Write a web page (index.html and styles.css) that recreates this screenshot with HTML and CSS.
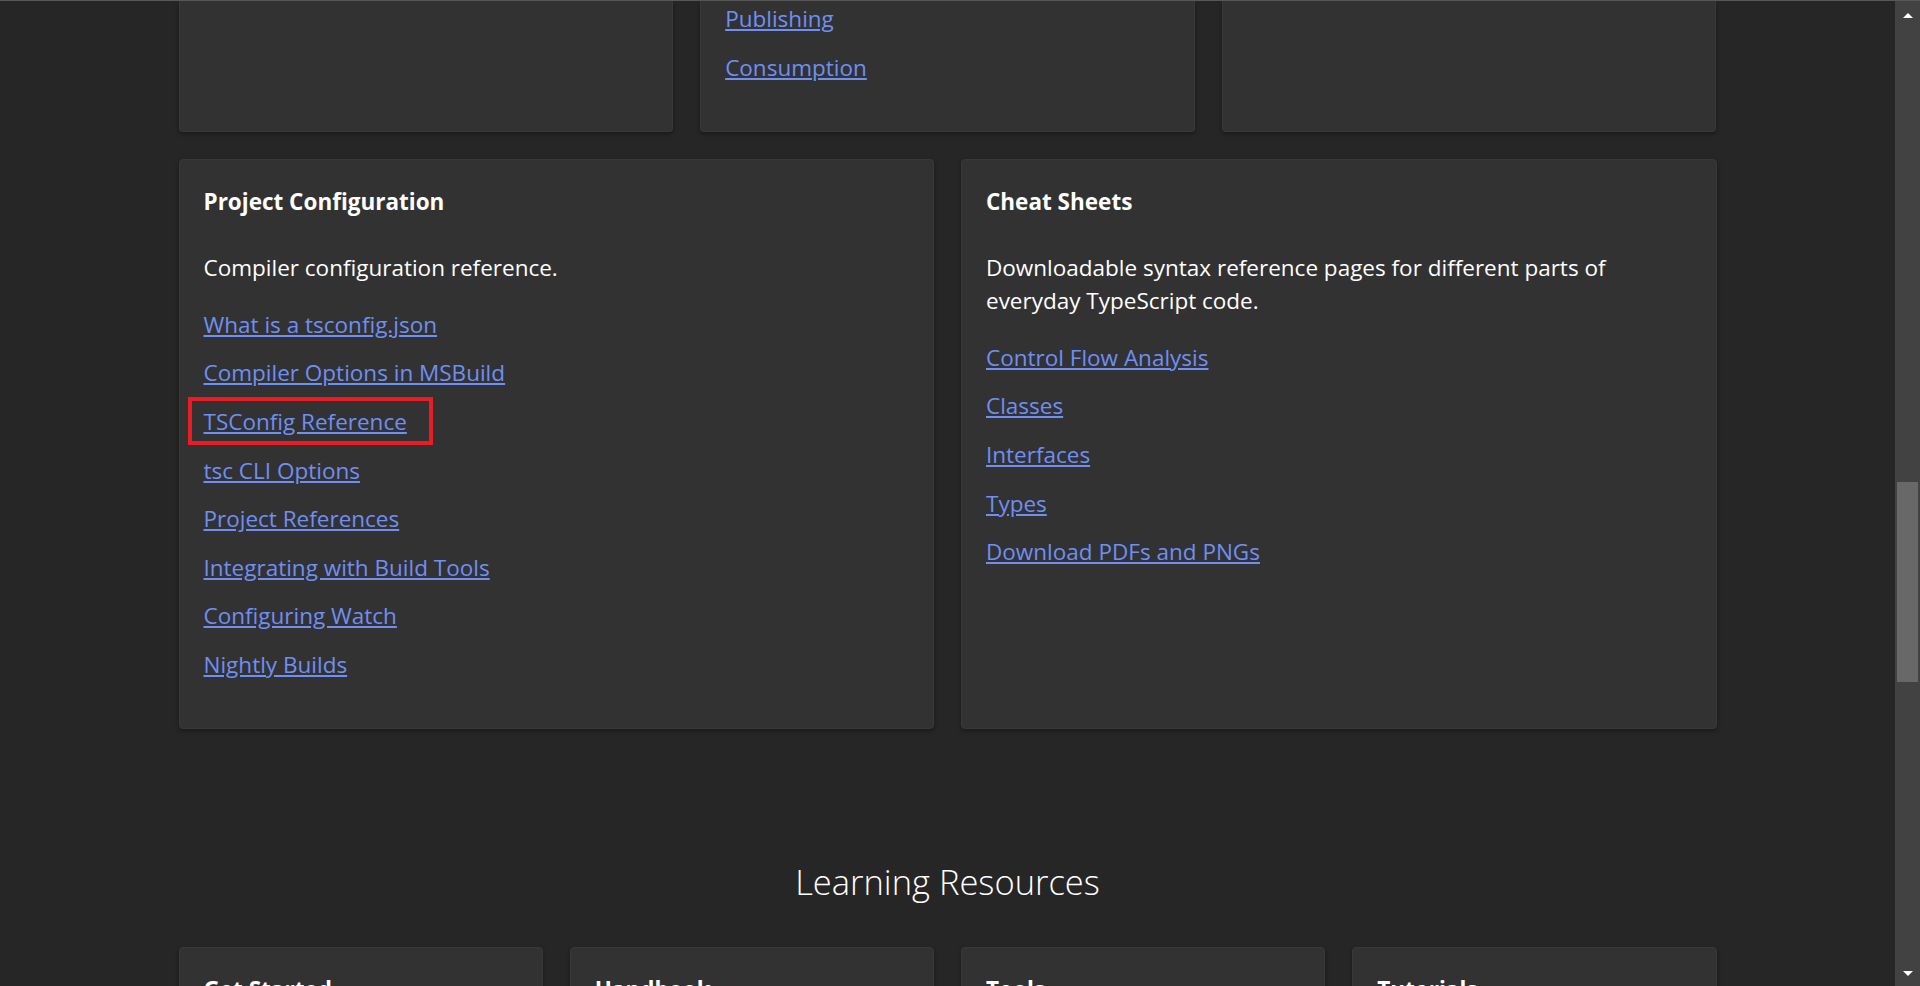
FILE: index.html
```html
<!DOCTYPE html>
<html lang="en">
<head>
<meta charset="utf-8">
<title>Documentation - TypeScript</title>
<link rel="stylesheet" href="styles.css">
</head>
<body>
<div class="window">
  <main class="page">
    <div class="container">
      <section class="grid grid-3">
        <div class="card card--continued"></div>
        <div class="card card--continued">
          <ul class="links">
            <li><a href="#">Publishing</a></li>
            <li><a href="#">Consumption</a></li>
          </ul>
        </div>
        <div class="card card--continued"></div>
      </section>

      <section class="grid grid-2">
        <div class="card">
          <h3 class="card-title">Project Configuration</h3>
          <p class="card-desc">Compiler configuration reference.</p>
          <ul class="links">
            <li><a href="#">What is a tsconfig.json</a></li>
            <li><a href="#">Compiler Options in MSBuild</a></li>
            <li class="highlight"><a href="#">TSConfig Reference</a></li>
            <li><a href="#">tsc CLI Options</a></li>
            <li><a href="#">Project References</a></li>
            <li><a href="#">Integrating with Build Tools</a></li>
            <li><a href="#">Configuring Watch</a></li>
            <li><a href="#">Nightly Builds</a></li>
          </ul>
        </div>
        <div class="card">
          <h3 class="card-title">Cheat Sheets</h3>
          <p class="card-desc">Downloadable syntax reference pages for different parts of everyday TypeScript code.</p>
          <ul class="links">
            <li><a href="#">Control Flow Analysis</a></li>
            <li><a href="#">Classes</a></li>
            <li><a href="#">Interfaces</a></li>
            <li><a href="#">Types</a></li>
            <li><a href="#">Download PDFs and PNGs</a></li>
          </ul>
        </div>
      </section>

      <h2 class="section-title">Learning Resources</h2>

      <section class="grid grid-4">
        <div class="card"><h3 class="card-title">Get Started</h3></div>
        <div class="card"><h3 class="card-title">Handbook</h3></div>
        <div class="card"><h3 class="card-title">Tools</h3></div>
        <div class="card"><h3 class="card-title">Tutorials</h3></div>
      </section>
    </div>
  </main>

  <div class="scrollbar" aria-hidden="true">
    <div class="sb-btn sb-btn--up"><span class="sb-arrow sb-arrow--up"></span></div>
    <div class="sb-track">
      <div class="sb-thumb" style="margin-top:453px;height:200px"></div>
    </div>
    <div class="sb-btn sb-btn--down"><span class="sb-arrow sb-arrow--down"></span></div>
  </div>
</div>
</body>
</html>
```

FILE: styles.css
```css
*,
*::before,
*::after {
  box-sizing: border-box;
}

html,
body {
  margin: 0;
  padding: 0;
  height: 100%;
}

body {
  background: #262626;
  color: #ffffff;
  font-family: "Open Sans", "Noto Sans", sans-serif;
  overflow: hidden;
}

.window {
  display: flex;
  height: 986px;
  border-top: 1px solid #575757;
}

.page {
  flex: 1;
  min-width: 0;
  overflow: hidden;
}

.container {
  width: 1538px;
  margin: 0 auto;
}

.grid {
  display: grid;
  gap: 27px;
}

.grid-3 {
  grid-template-columns: repeat(3, 1fr);
}

.grid-2 {
  grid-template-columns: repeat(2, 1fr);
  margin-top: 27px;
}

.grid-4 {
  grid-template-columns: repeat(4, 1fr);
}

.card {
  background: #323232;
  border: 1px solid #393939;
  border-radius: 4px;
  box-shadow: 0 2px 4px rgba(0, 0, 0, 0.35);
  padding: 25px 24px 31px;
}

.card--continued {
  border-top: 0;
  border-radius: 0 0 4px 4px;
  padding-top: 1px;
  padding-bottom: 32px;
}

.card-title {
  margin: 0 0 33px;
  font-size: 22.5px;
  line-height: 33px;
  font-weight: 700;
}

.card-desc {
  margin: 0 0 23.6px;
  font-size: 22.5px;
  line-height: 33px;
}

.links {
  list-style: none;
  margin: 0;
  padding: 0;
  font-size: 22.5px;
  line-height: 33px;
}

.links li {
  margin-bottom: 15.6px;
}

.links a {
  color: #6f8ff2;
  text-decoration: underline;
  text-underline-offset: 2px;
}

.highlight {
  position: relative;
}

.highlight::after {
  content: "";
  position: absolute;
  left: -16px;
  top: -8px;
  width: 245px;
  height: 48px;
  border: 4px solid #ec1c24;
  pointer-events: none;
}

.section-title {
  margin: 130px 0 43.5px;
  text-align: center;
  font-size: 34.5px;
  line-height: 45px;
  font-weight: 300;
}

.scrollbar {
  width: 25px;
  flex: 0 0 25px;
  background: #424242;
  display: flex;
  flex-direction: column;
}

.sb-btn {
  display: flex;
  align-items: center;
  justify-content: center;
}

.sb-btn--up {
  height: 28px;
}

.sb-btn--down {
  height: 26px;
}

.sb-track {
  flex: 1;
  padding: 0 2px;
}

.sb-thumb {
  background: #686868;
}

.sb-arrow {
  width: 0;
  height: 0;
  border-left: 5px solid transparent;
  border-right: 5px solid transparent;
}

.sb-arrow--up {
  border-bottom: 5px solid #ffffff;
}

.sb-arrow--down {
  border-top: 5px solid #ffffff;
}
```
